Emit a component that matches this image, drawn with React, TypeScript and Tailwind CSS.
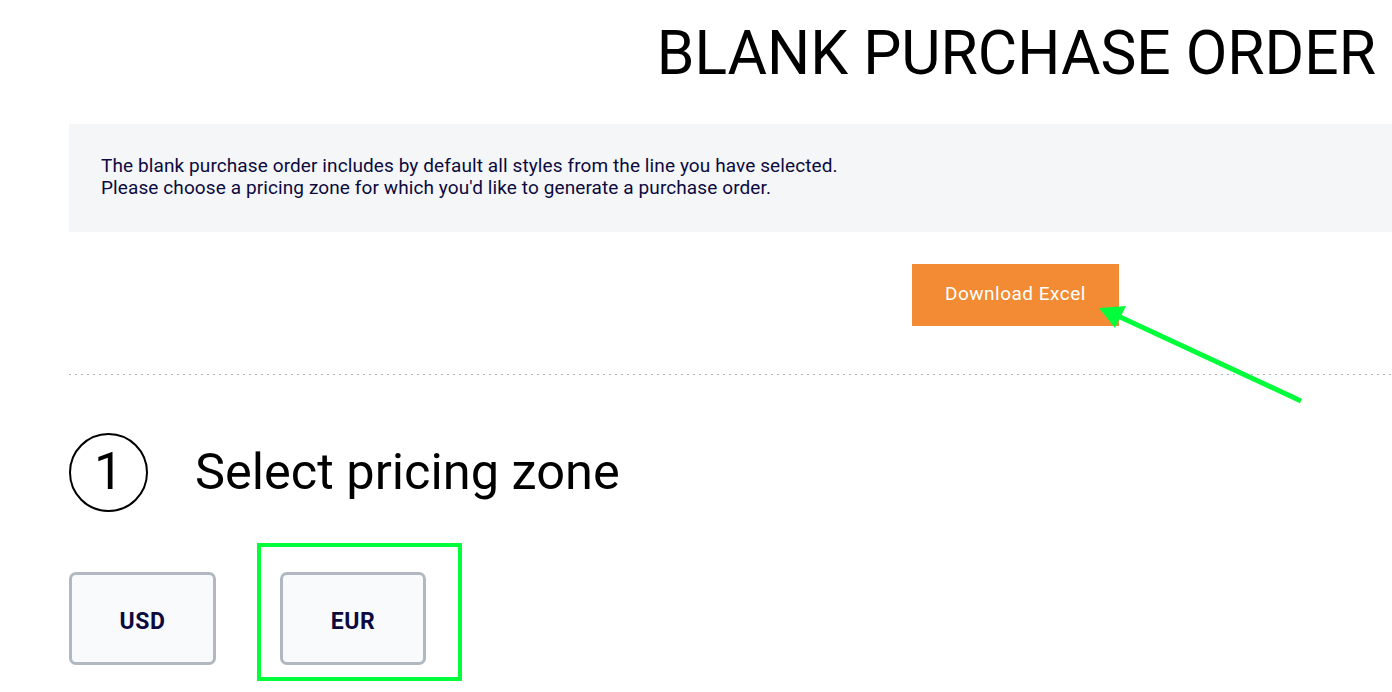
import React from "react";

export default function App() {
  return (
    <div className="relative w-[1392px] h-[692px] overflow-hidden bg-white font-['Roboto',sans-serif] text-black">
      <div className="flex flex-col">
        <h1 className="mt-[24px] pr-[16px] text-right text-[60.5px] leading-none font-normal">
          BLANK PURCHASE ORDER
        </h1>
        <div className="ml-[69px] mt-[39px] h-[108px] bg-[#f5f6f8] pl-[32px] pt-[31px] text-[19px] leading-[22px] tracking-[0.1px] text-[#0c0a3e]">
          <p>The blank purchase order includes by default all styles from the line you have selected.</p>
          <p>Please choose a pricing zone for which you'd like to generate a purchase order.</p>
        </div>
        <div className="ml-[912px] mt-[32px] flex h-[62px] w-[207px] items-center justify-center bg-[#f28b33] text-[19px] tracking-[0.5px] text-white">
          Download Excel
        </div>
        <div className="ml-[69px] mt-[48px] h-px bg-[repeating-linear-gradient(to_right,#b5b5b5_0_2px,transparent_2px_6px)]" />
        <div className="ml-[69px] mt-[58px] flex items-center gap-[47px]">
          <div className="flex h-[79px] w-[79px] items-center justify-center rounded-full border-2 border-black text-[52px] leading-none">
            1
          </div>
          <div className="text-[50.5px] leading-none">Select pricing zone</div>
        </div>
        <div className="ml-[69px] mt-[60px] flex gap-[64px]">
          <div className="flex h-[93px] w-[147px] items-center justify-center rounded-[7px] border-[3px] border-[#b1b8c1] bg-[#f9fafc] pt-[9px] text-[23px] tracking-[0.5px] font-bold text-[#0c0a3e]">
            USD
          </div>
          <div className="flex h-[93px] w-[146px] items-center justify-center rounded-[7px] border-[3px] border-[#b1b8c1] bg-[#f9fafc] pt-[9px] text-[23px] tracking-[0.5px] font-bold text-[#0c0a3e]">
            EUR
          </div>
        </div>
      </div>

      <div className="absolute left-[257px] top-[543px] h-[138px] w-[205px] border-[4px] border-[#00ff3a]" />

      <svg className="absolute left-0 top-0" width="1392" height="692" viewBox="0 0 1392 692">
        <line x1="1301" y1="401" x2="1118" y2="316" stroke="#00ff3a" strokeWidth="5" />
        <polygon points="1099,308 1126,306 1115,328" fill="#00ff3a" />
      </svg>
    </div>
  );
}
